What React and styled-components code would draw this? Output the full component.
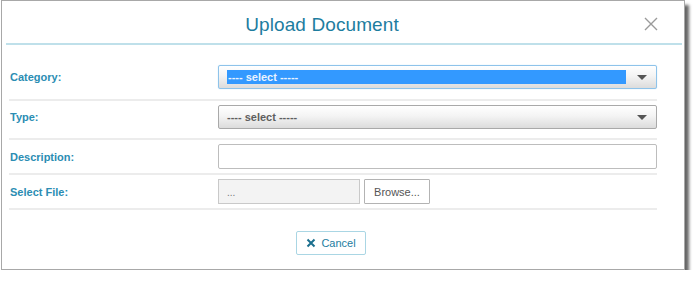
import React from "react";
import styled, { createGlobalStyle } from "styled-components";

const GlobalStyle = createGlobalStyle`
  html, body {
    margin: 0;
    padding: 0;
    background: #fff;
    font-family: "Liberation Sans", Arial, sans-serif;
  }
`;

const App = () => {
  return (
    <>
      <GlobalStyle />
      <Dialog>
        <Header>
          <Title>Upload Document</Title>
          <CloseButton aria-label="Close">
            <svg width="14" height="14" viewBox="0 0 14 14">
              <path d="M1 1 L13 13 M13 1 L1 13" stroke="#9a9a9a" strokeWidth="1.4" fill="none" />
            </svg>
          </CloseButton>
        </Header>
        <Form>
          <Row $top={20} $bottom={10}>
            <Label>Category:</Label>
            <Select $focused>
              <Highlight>---- select -----</Highlight>
              <Arrow />
            </Select>
          </Row>
          <Row $top={4} $bottom={9}>
            <Label>Type:</Label>
            <Select>
              <SelectText>---- select -----</SelectText>
              <Arrow />
            </Select>
          </Row>
          <Row $top={4} $bottom={4}>
            <Label>Description:</Label>
            <TextInput />
          </Row>
          <Row $top={4} $bottom={4}>
            <Label>Select File:</Label>
            <FileGroup>
              <FileField>...</FileField>
              <BrowseButton>Browse...</BrowseButton>
            </FileGroup>
          </Row>
          <Footer>
            <CancelButton>
              <svg width="10" height="10" viewBox="0 0 10 10">
                <path d="M1.5 1.5 L8.5 8.5 M8.5 1.5 L1.5 8.5" stroke="#1b6f8e" strokeWidth="2" fill="none" />
              </svg>
              Cancel
            </CancelButton>
          </Footer>
        </Form>
      </Dialog>
    </>
  );
};

export default App;

const Dialog = styled.div`
  width: 684px;
  margin-left: 1px;
  border: 1px solid #a8a8a8;
  background: #fff;
  box-shadow: 4px 5px 3px rgba(0, 0, 0, 0.6);
  box-sizing: border-box;
`;

const Header = styled.div`
  position: relative;
  height: 42px;
  margin: 0 2px 0 4px;
  padding-right: 44px;
  border-bottom: 2px solid #bfe0ea;
  display: flex;
  align-items: center;
  justify-content: center;
`;

const Title = styled.h1`
  margin: 0;
  font-size: 19px;
  font-weight: normal;
  color: #1d7d9f;
  letter-spacing: 0.1px;
  padding-top: 6px;
`;

const CloseButton = styled.button`
  position: absolute;
  right: 24px;
  top: 16px;
  border: none;
  background: none;
  padding: 0;
  line-height: 0;
`;

const Form = styled.div`
  padding: 0 27px 14px 7px;
`;

const Row = styled.div`
  display: grid;
  grid-template-columns: 209px 1fr;
  align-items: center;
  padding: ${({ $top }) => $top}px 0 ${({ $bottom }) => $bottom}px;
  border-bottom: 2px solid #ececec;
`;

const Label = styled.label`
  font-size: 11px;
  font-weight: bold;
  color: #2b8db3;
  padding-left: 1px;
`;

const Select = styled.div`
  position: relative;
  height: 24px;
  box-sizing: border-box;
  border: 1px solid ${({ $focused }) => ($focused ? "#8ec3ea" : "#a9a9a9")};
  border-radius: 2px;
  background: linear-gradient(#ffffff, #f4f4f4 45%, #dcdcdc);
  display: flex;
  align-items: center;
  padding: 0 30px 0 8px;
  box-shadow: ${({ $focused }) => ($focused ? "0 0 1px #9fd0f5" : "none")};
`;

const Highlight = styled.span`
  flex: 1;
  height: 14px;
  line-height: 14px;
  background: #3399ff;
  color: #e9f3ff;
  font-size: 11px;
  font-weight: bold;
  padding-left: 1px;
`;

const SelectText = styled.span`
  font-size: 11px;
  font-weight: bold;
  color: #5e5e5e;
`;

const Arrow = styled.span`
  position: absolute;
  right: 9px;
  top: 9px;
  width: 0;
  height: 0;
  border-left: 5px solid transparent;
  border-right: 5px solid transparent;
  border-top: 5px solid #555;
`;

const TextInput = styled.div`
  height: 25px;
  box-sizing: border-box;
  border: 1px solid #bdbdbd;
  border-radius: 2px;
  background: #fff;
`;

const FileGroup = styled.div`
  display: flex;
  gap: 4px;
`;

const FileField = styled.div`
  width: 142px;
  height: 25px;
  box-sizing: border-box;
  border: 1px solid #c9c9c9;
  background: #f3f3f3;
  color: #777;
  font-size: 10px;
  padding: 7px 0 0 8px;
`;

const BrowseButton = styled.button`
  width: 66px;
  height: 25px;
  border: 1px solid #b3b3b3;
  border-radius: 1px;
  background: #fff;
  color: #555;
  font-family: "Liberation Sans", Arial, sans-serif;
  font-size: 11px;
  padding: 0;
`;

const Footer = styled.div`
  display: flex;
  justify-content: center;
  padding-top: 21px;
  padding-right: 4px;
`;

const CancelButton = styled.button`
  display: flex;
  align-items: center;
  gap: 5px;
  height: 24px;
  width: 70px;
  justify-content: center;
  border: 1px solid #aad6e4;
  border-radius: 2px;
  background: #fff;
  color: #1d7d9f;
  font-family: "Liberation Sans", Arial, sans-serif;
  font-size: 11px;
  padding: 0;
`;
